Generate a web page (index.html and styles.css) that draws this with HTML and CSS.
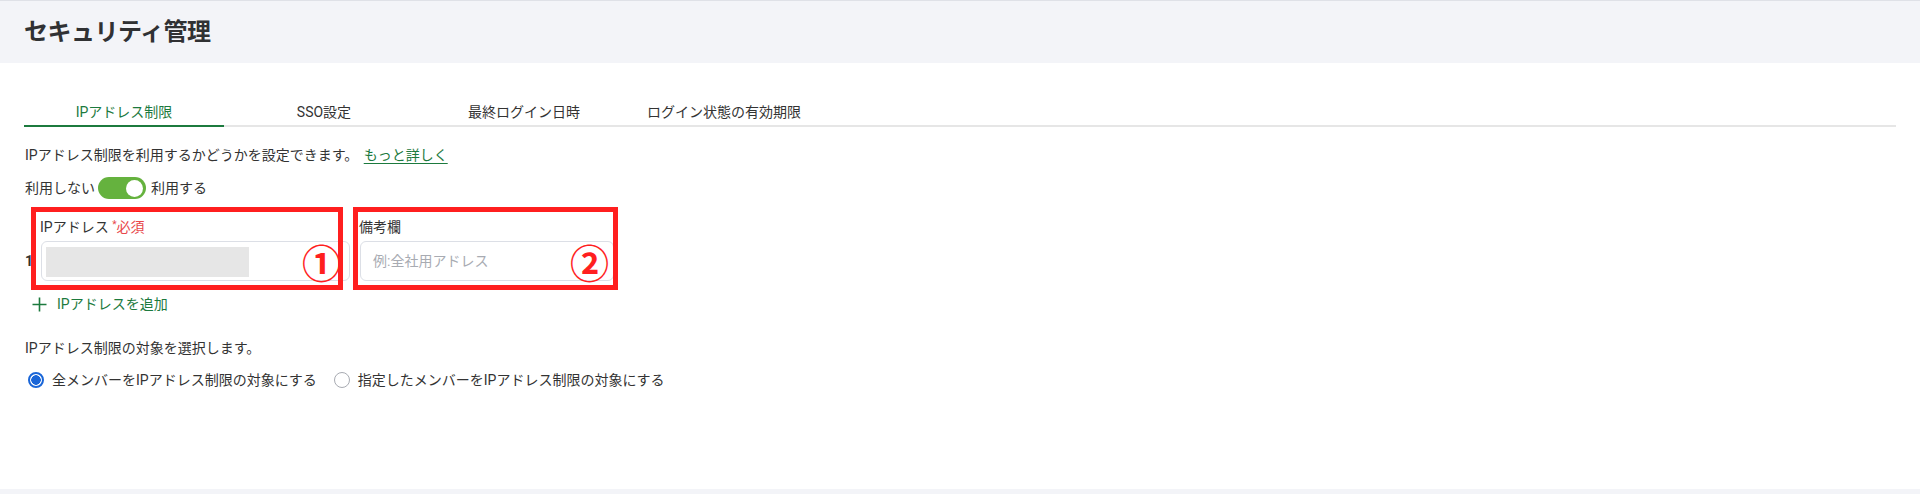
FILE: index.html
```html
<!DOCTYPE html>
<html lang="ja">
<head>
    <meta charset="UTF-8">
    <meta name="viewport" content="width=device-width, initial-scale=1.0">
    <title>セキュリティ管理</title>
    <link rel="stylesheet" href="styles.css">
</head>
<body>
    <div class="page-header">
        <h1>セキュリティ管理</h1>
    </div>

    <div class="main">
        <div class="tabs">
            <div class="tab active">IPアドレス制限</div>
            <div class="tab">SSO設定</div>
            <div class="tab">最終ログイン日時</div>
            <div class="tab">ログイン状態の有効期限</div>
        </div>

        <p class="desc">IPアドレス制限を利用するかどうかを設定できます。 <a href="#" class="link">もっと詳しく</a></p>

        <div class="switch-row">
            <span>利用しない</span>
            <span class="switch on"><span class="knob"></span></span>
            <span>利用する</span>
        </div>

        <div class="fields">
            <div class="labels">
                <div class="field-label ip">IPアドレス <span class="required"><sup>*</sup>必須</span></div>
                <div class="field-label note">備考欄</div>
            </div>
            <div class="field-row">
                <span class="row-num">1</span>
                <div class="input ip">
                    <span class="masked"></span>
                </div>
                <div class="input note">
                    <span class="placeholder">例:全社用アドレス</span>
                </div>
            </div>

            <!-- 注釈の赤枠 -->
            <div class="mark mark-1"><span class="mark-num">①</span></div>
            <div class="mark mark-2"><span class="mark-num">②</span></div>
        </div>

        <a href="#" class="add-btn">
            <svg width="15" height="15" viewBox="0 0 15 15">
                <path d="M7.5 0.5v14M0.5 7.5h14" stroke="#1c7a3e" stroke-width="1.6" fill="none"/>
            </svg>
            IPアドレスを追加
        </a>

        <p class="desc target">IPアドレス制限の対象を選択します。</p>

        <div class="radio-row">
            <label class="radio-item">
                <span class="radio checked"></span>
                全メンバーをIPアドレス制限の対象にする
            </label>
            <label class="radio-item">
                <span class="radio"></span>
                指定したメンバーをIPアドレス制限の対象にする
            </label>
        </div>
    </div>
</body>
</html>
```

FILE: styles.css
```css
body {
    font-family: Roboto, 'Noto Sans CJK JP', sans-serif;
    margin: 0;
    background: #f3f4f8;
    color: #333;
    font-size: 14px;
    line-height: 20px;
}
.page-header {
    height: 62px;
    border-top: 1px solid #dfe1e7;
    padding: 0 24px;
    display: flex;
    align-items: center;
}
.page-header h1 {
    margin: 0;
    font-size: 24px;
    font-weight: bold;
    color: #303133;
    letter-spacing: -0.5px;
}
.main {
    background: #fff;
    height: 387px;
    padding: 39px 24px 0;
}
.tabs {
    display: flex;
    border-bottom: 2px solid #e6e6e6;
}
.tab {
    width: 200px;
    text-align: center;
    padding-bottom: 3px;
    margin-bottom: -2px;
    border-bottom: 2px solid transparent;
    color: #333;
}
.tab.active {
    color: #1c7a3e;
    border-bottom-color: #1c7a3e;
}
.desc {
    margin: 18px 0 0;
    padding-left: 1px;
}
.link {
    color: #1c7a3e;
    text-decoration: underline;
    text-underline-offset: 3px;
    margin-left: 2px;
}
.switch-row {
    display: flex;
    align-items: center;
    height: 24px;
    margin-top: 11px;
    padding-left: 1px;
}
.switch {
    width: 48px;
    height: 22px;
    border-radius: 11px;
    background: #dcdfe6;
    margin: 0 5px 0 3px;
    position: relative;
}
.switch.on {
    background: #65b23e;
}
.knob {
    position: absolute;
    top: 3px;
    right: 3px;
    width: 17px;
    height: 17px;
    border-radius: 50%;
    background: #fff;
}
.fields {
    position: relative;
    margin-top: 17px;
}
.labels {
    display: flex;
    padding-left: 16px;
}
.field-label.ip {
    width: 319px;
}
.required {
    color: #e8474a;
}
.required sup {
    font-size: 10px;
    line-height: 0;
    vertical-align: 4px;
}
.field-row {
    display: flex;
    align-items: center;
    margin-top: 4px;
}
.row-num {
    width: 16px;
    padding-left: 1px;
    font-weight: bold;
}
.input {
    height: 38px;
    border: 1px solid #dcdfe6;
    border-radius: 6px;
    background: #fff;
    display: flex;
    align-items: center;
}
.input.ip {
    width: 307px;
    margin-right: 10px;
}
.input.note {
    width: 252px;
}
.masked {
    width: 203px;
    height: 30px;
    margin: 2px 0 0 4px;
    background: #e6e6e6;
}
.placeholder {
    color: #a8abb2;
    padding-left: 12px;
}
.mark {
    position: absolute;
    top: -10px;
    height: 73px;
    border: 5px solid #ff1f1f;
}
.mark-1 {
    left: 7px;
    width: 302px;
}
.mark-2 {
    left: 329px;
    width: 255px;
}
.mark-num {
    position: absolute;
    bottom: 0;
    right: -3px;
    color: #ff1f1f;
    font-size: 39px;
    font-weight: bold;
    line-height: 39px;
}
.mark-2 .mark-num {
    right: 4px;
}
.add-btn {
    display: flex;
    align-items: center;
    gap: 10px;
    margin-top: 13px;
    padding-left: 8px;
    color: #1c7a3e;
    text-decoration: none;
}
.target {
    margin-top: 24px;
}
.radio-row {
    display: flex;
    gap: 17px;
    margin-top: 12px;
    padding-left: 4px;
}
.radio-item {
    display: flex;
    align-items: center;
    gap: 8px;
}
.radio {
    width: 14px;
    height: 14px;
    border: 1px solid #a8abb2;
    border-radius: 50%;
    background: #fff;
    box-sizing: content-box;
}
.radio.checked {
    width: 12px;
    height: 12px;
    border: 2px solid #1a66d8;
    background: radial-gradient(circle, #1a66d8 0 4.5px, #fff 5px);
}
```
